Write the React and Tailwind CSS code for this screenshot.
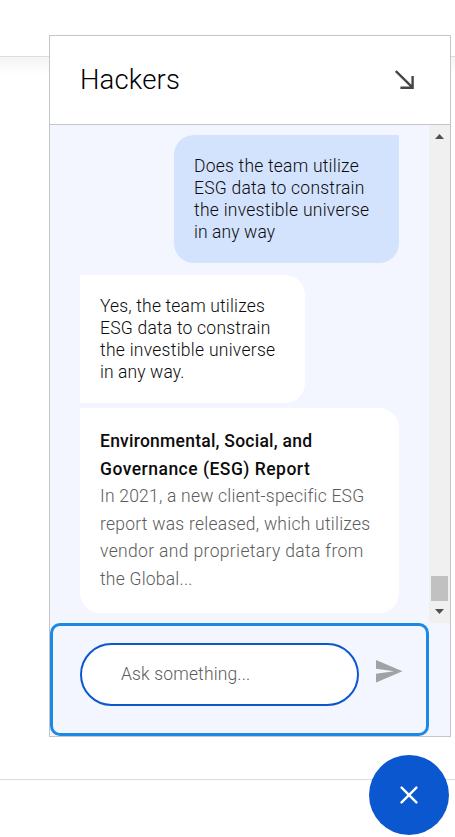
function Line({ children, className = "tracking-[0.22px]" }) {
  return <span className={"block whitespace-nowrap " + className}>{children}</span>;
}

function Header() {
  return (
    <header className="flex h-[89px] shrink-0 items-center justify-between border-b border-[#c4c6c6] bg-white pl-[30px] pr-[35px]">
      <h1 className="text-[27.5px] font-light leading-none tracking-[0.15px] text-black">Hackers</h1>
      <svg width="20" height="20" viewBox="0 0 20 20" fill="none" stroke="#444746" strokeWidth="2.4">
        <path d="M0.8 1L17.4 17.4M17.6 6V17.8H5.4" />
      </svg>
    </header>
  );
}

function Scrollbar() {
  return (
    <div className="flex w-[21px] shrink-0 flex-col items-center bg-[#f0f0f0]">
      <svg className="mt-[9px]" width="9" height="5" viewBox="0 0 9 5" fill="#505050">
        <path d="M0 5L4.5 0L9 5Z" />
      </svg>
      <div className="mt-auto h-[25px] w-[17px] bg-[#c1c1c1]" />
      <svg className="mb-[9px] mt-2" width="9" height="5" viewBox="0 0 9 5" fill="#505050">
        <path d="M0 0L4.5 5L9 0Z" />
      </svg>
    </div>
  );
}

function Messages() {
  return (
    <div className="flex h-[498px] shrink-0">
      <div className="flex flex-1 flex-col pl-[30px] pr-[30px] pt-[10px] text-[17.5px] font-light text-[#0c0c0c]">
        <div className="h-[128px] w-[225px] self-end rounded-[20px] rounded-tr-none bg-[#d3e3fd] p-5 leading-[22px]">
          <Line>Does the team utilize</Line>
          <Line>ESG data to constrain</Line>
          <Line className="tracking-[0.27px]">the investible universe</Line>
          <Line className="tracking-[0.1px]">in any way</Line>
        </div>
        <div className="mt-3 h-[128px] w-[225px] rounded-r-[20px] bg-white p-5 leading-[22px]">
          <Line className="tracking-[0.17px]">Yes, the team utilizes</Line>
          <Line>ESG data to constrain</Line>
          <Line className="tracking-[0.27px]">the investible universe</Line>
          <Line className="tracking-[0.1px]">in any way.</Line>
        </div>
        <div className="mt-[5px] h-[205px] rounded-[20px] rounded-tl-none bg-white p-5 leading-[27.5px]">
          <Line className="font-medium tracking-[0.24px]">Environmental, Social, and</Line>
          <Line className="font-medium tracking-[0.48px]">Governance (ESG) Report</Line>
          <div className="text-[#5c5c5c]">
            <Line>In 2021, a new client-specific ESG</Line>
            <Line className="tracking-[0.25px]">report was released, which utilizes</Line>
            <Line className="tracking-[0.35px]">vendor and proprietary data from</Line>
            <Line>the Global...</Line>
          </div>
        </div>
      </div>
      <Scrollbar />
    </div>
  );
}

function Composer() {
  return (
    <form className="flex h-[113px] w-[379px] items-start rounded-[10px] border-[3px] border-[#1e88e5] pl-[27px] pt-[17px]">
      <div className="flex h-[63px] w-[279px] items-center rounded-full border-2 border-[#0b57d0] bg-white pl-[39px] text-[17.5px] font-light text-[#5c5c5c]">
        <Line className="tracking-[0.15px]">Ask something...</Line>
      </div>
      <svg className="ml-[17px] mt-[17px]" width="27" height="23" viewBox="0 0 27 23" fill="#a0a2a6">
        <path d="M0 0L26.5 11.3L0 22.6V13.8L18 11.3L0 8.8Z" />
      </svg>
    </form>
  );
}

export default function App() {
  return (
    <div className="relative h-[837px] w-[455px] overflow-hidden bg-white font-['Roboto',sans-serif]">
      <div className="h-[57px] border-b border-[#dadce0]" />
      <div className="h-[722px] bg-linear-to-b from-[#f4f4f4] to-white to-[18px]" />
      <div className="h-px bg-[#dadce0]" />
      <section className="absolute left-[49px] top-[35px] flex h-[702px] w-[402px] flex-col border border-[#c4c6c6] bg-[#f3f6fe]">
        <Header />
        <Messages />
        <Composer />
      </section>
      <button aria-label="Close chat" className="absolute left-[369px] top-[755px] flex size-20 items-center justify-center rounded-full bg-[#0b57d0]">
        <svg width="18" height="18" viewBox="0 0 18 18" stroke="#fff" strokeWidth="2.4" strokeLinecap="round">
          <path d="M1.6 1.6L16.4 16.4M16.4 1.6L1.6 16.4" />
        </svg>
      </button>
    </div>
  );
}
